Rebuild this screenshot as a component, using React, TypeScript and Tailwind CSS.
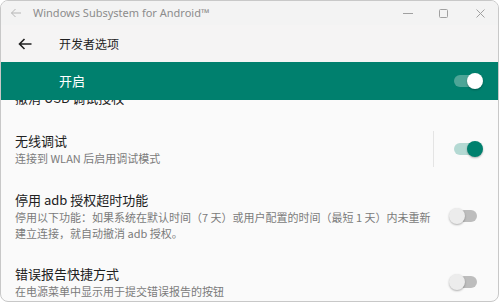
import * as React from 'react';

const cjk = { fontFamily: '"Noto Sans CJK SC", "Noto Sans", sans-serif' };

interface ISwitch {
  on: boolean;
  accent?: boolean;
}

// android-style switch: small track, big thumb
const Switch: React.FunctionComponent<ISwitch> = ({ on, accent }) => {
  const track = accent ? 'bg-[#4da597]' : on ? 'bg-[#b4d9d3]' : 'bg-[#bdbdbd]';
  const thumb = accent ? 'bg-white' : on ? 'bg-[#00806e]' : 'bg-[#ececec]';
  return (
    <div className="relative w-[34px] h-[18px] shrink-0">
      <div className={`absolute left-[5px] top-[3px] w-[23px] h-[12px] rounded-full ${track}`} />
      <div
        className={`absolute top-[1px] w-[16px] h-[16px] rounded-full shadow-[0_1px_2px_rgba(0,0,0,0.3)] ${thumb} ${
          on ? 'left-[18px]' : 'left-0'
        }`}
      />
    </div>
  );
};

interface IRow {
  title: string;
  lines?: string[];
  on: boolean;
  divider?: boolean;
  className?: string;
}

const Row: React.FunctionComponent<IRow> = ({ title, lines = [], on, divider, className }) => (
  <div className={`flex items-center pl-[14px] pr-[15px] py-[12px] ${className || ''}`}>
    <div className="flex-1">
      <div className="text-[13px] leading-[18px] text-[#212121]">{title}</div>
      {lines.map((line, i) => (
        <div key={i} className="text-[11px] leading-[16px] text-[#7a7a7a] whitespace-nowrap">
          {line}
        </div>
      ))}
    </div>
    {divider && <div className="w-px h-[36px] bg-[#e4e4e4] mr-[15px]" />}
    <Switch on={on} />
  </div>
);

export default function App() {
  return (
    <div className="w-[499px] h-[303px] bg-white" style={cjk}>
      <div className="w-[499px] h-[302px] flex flex-col overflow-hidden rounded-[8px] border border-[#c8c8c8] bg-[#fafafa]">
        {/* window title bar */}
        <div className="h-[24px] shrink-0 flex items-center bg-[#f3f3f3]">
          <svg className="ml-[9px]" width="12" height="10" viewBox="0 0 12 10" fill="none" stroke="#b5b5b5" strokeWidth="1">
            <path d="M11 5H1.5M5.5 1L1.5 5l4 4" />
          </svg>
          <span className="ml-[11px] text-[11px] text-[#8c8c8c]" style={{ fontFamily: '"Noto Sans", sans-serif' }}>
            Windows Subsystem for Android™
          </span>
          <div className="ml-auto flex items-center">
            <svg width="10" height="10" viewBox="0 0 10 10" stroke="#a0a0a0" strokeWidth="1">
              <path d="M0 5.5h10" />
            </svg>
            <svg className="ml-[26px]" width="9" height="9" viewBox="0 0 9 9" fill="none" stroke="#a0a0a0" strokeWidth="1">
              <rect x="0.5" y="0.5" width="8" height="8" rx="1" />
            </svg>
            <svg className="ml-[28px] mr-[13px]" width="9" height="9" viewBox="0 0 9 9" stroke="#a0a0a0" strokeWidth="1">
              <path d="M0.5 0.5l8 8M8.5 0.5l-8 8" />
            </svg>
          </div>
        </div>

        {/* app bar */}
        <div className="h-[37px] shrink-0 flex items-center bg-[#f5f4f4]">
          <svg className="ml-[17px]" width="14" height="12" viewBox="0 0 14 12" fill="none" stroke="#1f1f1f" strokeWidth="1.6">
            <path d="M13.5 6H1.5M6.5 1L1.5 6l5 5" />
          </svg>
          <span className="ml-[27px] text-[12px] text-[#1f1f1f]">开发者选项</span>
        </div>

        {/* main switch */}
        <div className="h-[38px] shrink-0 flex items-center bg-[#00806e] pl-[58px] pr-[15px] relative z-10">
          <span className="flex-1 text-[13px] text-white">开启</span>
          <Switch on accent />
        </div>

        <div className="flex-1 overflow-hidden">
          <Row title="撤消 USB 调试授权" on={false} className="-mt-[23px] [&>div:last-child]:invisible" />
          <Row title="无线调试" lines={['连接到 WLAN 后启用调试模式']} on divider />
          <Row
            title="停用 adb 授权超时功能"
            lines={['停用以下功能：如果系统在默认时间（7 天）或用户配置的时间（最短 1 天）内未重新', '建立连接，就自动撤消 adb 授权。']}
            on={false}
          />
          <Row title="错误报告快捷方式" lines={['在电源菜单中显示用于提交错误报告的按钮']} on={false} />
        </div>
      </div>
    </div>
  );
}
